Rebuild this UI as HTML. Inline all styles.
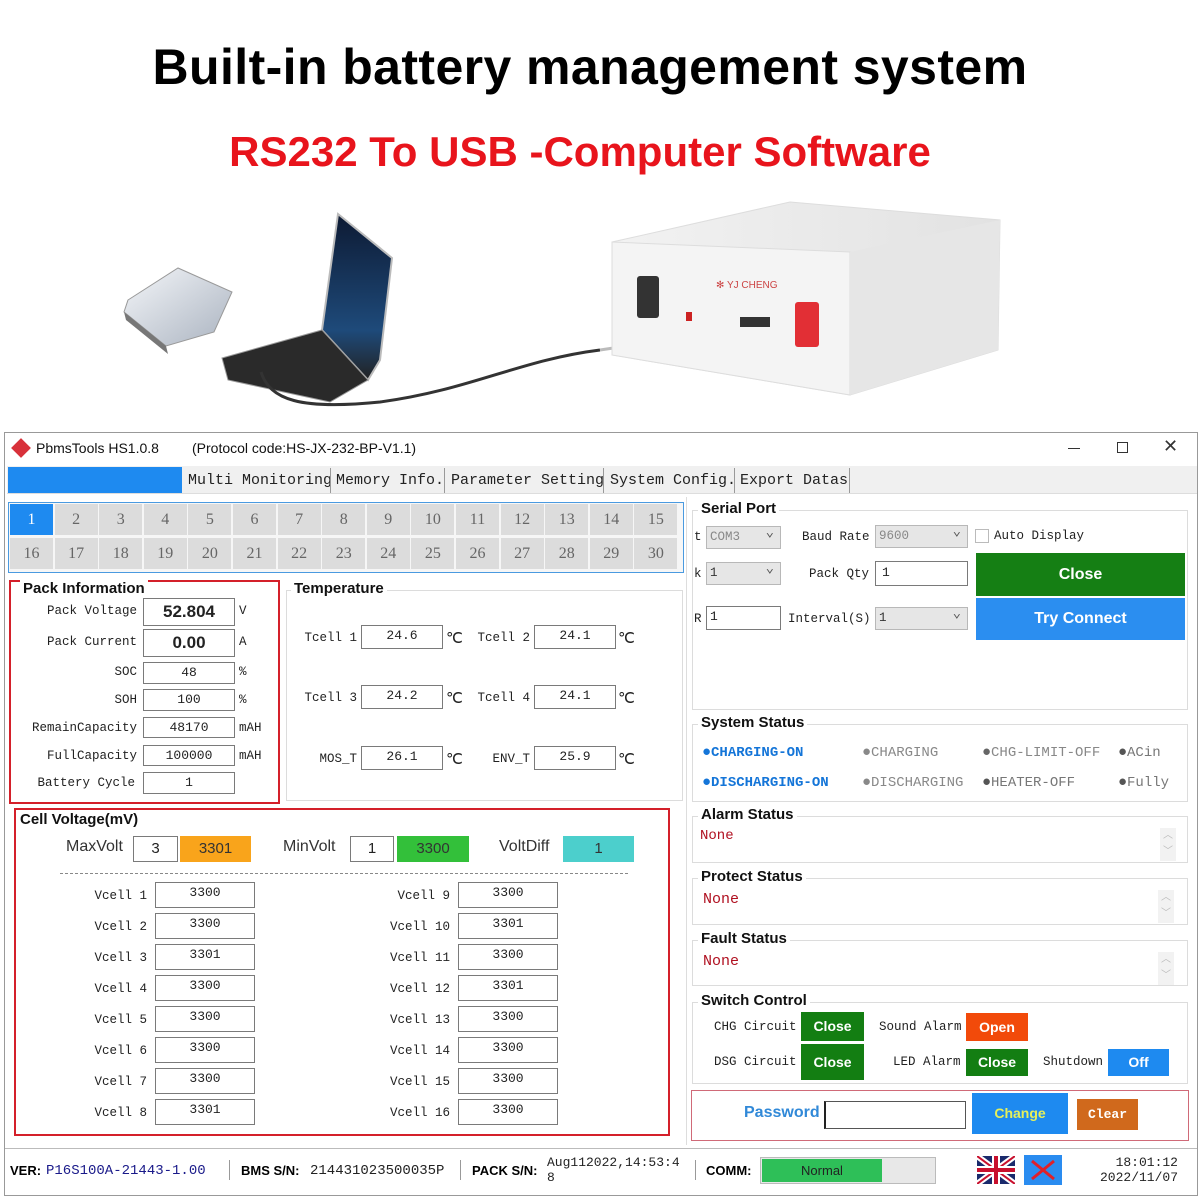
<!DOCTYPE html>
<html><head><meta charset="utf-8"><style>
*{margin:0;padding:0;box-sizing:border-box}
body{width:1200px;height:1200px;background:#fff;position:relative;overflow:hidden;font-family:"Liberation Sans",sans-serif}
.a{position:absolute}
.m{font-family:"Liberation Mono","DejaVu Sans Mono",monospace;font-size:12.5px;color:#222;white-space:nowrap}
.s{font-size:14px}
.b{position:absolute;border:1px solid #7a7a7a;background:#fff;font-family:"Liberation Mono",monospace;font-size:13px;text-align:center;color:#222}
.g{position:absolute;border:1px solid #dcdcdc}
.gt{position:absolute;font-weight:bold;font-size:15px;color:#111;background:#fff;padding:0 3px;white-space:nowrap}
.r{text-align:right}
.btn{position:absolute;color:#fff;font-weight:bold;font-size:14px;text-align:center}
.cell{position:absolute;width:43px;height:31px;background:#dcdcdc;color:#666;font-family:"Liberation Serif",serif;font-size:16px;text-align:center;line-height:31px}
.sel{position:absolute;border:1px solid #b8b8b8;background:#e6e6e6;font-family:"Liberation Mono",monospace;font-size:12.5px;color:#333;padding-left:3px}
.sel:after{content:"⌄";position:absolute;right:6px;top:-4px;color:#555;font-size:14px}
</style></head><body>

<div class="a" style="left:0;top:38px;width:1180px;text-align:center;font-size:50px;font-weight:bold;color:#000;letter-spacing:0.4px">Built-in battery management system</div>
<div class="a" style="left:0;top:128px;width:1160px;text-align:center;font-size:42px;font-weight:bold;color:#e8141c">RS232 To USB -Computer Software</div>

<svg class="a" style="left:0;top:190px" width="1200" height="240">
 <defs><linearGradient id="lg" x1="0" y1="0" x2="1" y2="1"><stop offset="0" stop-color="#f4f6f9"/><stop offset="1" stop-color="#aab3c0"/></linearGradient>
 <linearGradient id="bx" x1="0" y1="0" x2="1" y2="0"><stop offset="0" stop-color="#f2f2f2"/><stop offset="1" stop-color="#e2e2e2"/></linearGradient>
 <linearGradient id="sc" x1="0" y1="0" x2="0" y2="1"><stop offset="0" stop-color="#0d1a33"/><stop offset="0.7" stop-color="#1e4a7a"/><stop offset="1" stop-color="#222"/></linearGradient></defs>
 <polygon points="128,110 178,78 232,102 214,142 166,156 124,122" fill="url(#lg)" stroke="#999"/>
 <polygon points="124,122 166,156 168,164 126,130" fill="#777"/>
 <polygon points="338,24 392,68 380,170 368,190 322,140" fill="url(#sc)" stroke="#bbb" stroke-width="2"/>
 <polygon points="222,168 322,140 368,190 330,212 228,190" fill="#2a2a2a" stroke="#999"/>
 <path d="M261,182 C 270,210 300,220 380,212 C 470,200 520,170 600,160" stroke="#333" stroke-width="3" fill="none"/>
 <path d="M600,160 L 700,145" stroke="#bbb" stroke-width="3" fill="none"/>
 <polygon points="612,52 790,12 1000,30 998,160 850,205 612,165" fill="url(#bx)" stroke="#ddd"/>
 <polygon points="612,52 850,62 850,205 612,165" fill="#f4f4f4" stroke="#ddd"/>
 <polygon points="850,62 1000,30 998,160 850,205" fill="#e6e6e6"/>
 <rect x="637" y="86" width="22" height="42" fill="#333" rx="3"/>
 <rect x="795" y="112" width="24" height="45" fill="#e22f35" rx="3"/>
 <text x="716" y="98" font-size="10" fill="#c44">✻ YJ CHENG</text>
 <rect x="686" y="122" width="6" height="9" fill="#c22"/>
 <rect x="740" y="127" width="30" height="10" fill="#333"/>
</svg>

<!-- window -->
<div class="a" style="left:4px;top:432px;width:1194px;height:764px;border:1px solid #999;background:#fff"></div>
<div class="a" style="left:14px;top:441px;width:14px;height:14px;background:#d8313a;transform:rotate(45deg)"></div>
<div class="a" style="left:36px;top:440px;font-size:14px;color:#111">PbmsTools HS1.0.8</div>
<div class="a" style="left:192px;top:440px;font-size:14px;color:#111">(Protocol code:HS-JX-232-BP-V1.1)</div>
<div class="a" style="left:1068px;top:448px;width:12px;height:1px;background:#333"></div>
<div class="a" style="left:1117px;top:442px;width:11px;height:11px;border:1px solid #333"></div>
<div class="a" style="left:1163px;top:436px;font-size:18px;color:#333">✕</div>

<div class="a" style="left:7px;top:466px;width:1190px;height:28px;background:#f0f0f0;border-bottom:1px solid #ddd"></div>
<div class="a" style="left:8px;top:467px;width:174px;height:26px;background:#1e8af0"></div>
<div class="a m" style="left:188px;top:472px;font-size:15px">Multi Monitoring</div>
<div class="a" style="left:330px;top:468px;width:1px;height:25px;background:#999"></div>
<div class="a m" style="left:336px;top:472px;font-size:15px">Memory Info.</div>
<div class="a" style="left:444px;top:468px;width:1px;height:25px;background:#999"></div>
<div class="a m" style="left:451px;top:472px;font-size:15px">Parameter Setting</div>
<div class="a" style="left:603px;top:468px;width:1px;height:25px;background:#999"></div>
<div class="a m" style="left:610px;top:472px;font-size:15px">System Config.</div>
<div class="a" style="left:734px;top:468px;width:1px;height:25px;background:#999"></div>
<div class="a m" style="left:740px;top:472px;font-size:15px">Export Datas</div>
<div class="a" style="left:849px;top:468px;width:1px;height:25px;background:#999"></div>

<!-- pack grid -->
<div class="a" style="left:8px;top:502px;width:676px;height:71px;border:1px solid #4a9ae0;background:#f6f6f6"></div>
<div id="grid"></div>
<script>
var h='';for(var i=0;i<30;i++){var r=i<15?0:1,c=i%15;var x=10+c*44.6,y=504+r*34;
h+='<div class="cell" style="left:'+x+'px;top:'+y+'px;'+(i==0?'background:#1e8af0;color:#fff':'')+'">'+(i+1)+'</div>';}
document.getElementById('grid').innerHTML=h;
</script>

<!-- Pack info -->
<div class="a" style="left:9px;top:580px;width:271px;height:224px;border:2px solid #d4202a"></div>
<div class="gt" style="left:20px;top:580px;font-size:15px">Pack Information</div>
<div class="a m r" style="left:10px;top:604px;width:127px">Pack Voltage</div>
<div class="b" style="left:143px;top:598px;width:92px;height:28px;font:bold 17px 'Liberation Sans';line-height:26px">52.804</div>
<div class="a m" style="left:239px;top:604px">V</div>
<div class="a m r" style="left:10px;top:635px;width:127px">Pack Current</div>
<div class="b" style="left:143px;top:629px;width:92px;height:28px;font:bold 17px 'Liberation Sans';line-height:26px">0.00</div>
<div class="a m" style="left:239px;top:635px">A</div>
<div class="a m r" style="left:10px;top:665px;width:127px">SOC</div>
<div class="b" style="left:143px;top:662px;width:92px;height:22px;line-height:20px">48</div>
<div class="a m" style="left:239px;top:665px">%</div>
<div class="a m r" style="left:10px;top:693px;width:127px">SOH</div>
<div class="b" style="left:143px;top:689px;width:92px;height:22px;line-height:20px">100</div>
<div class="a m" style="left:239px;top:693px">%</div>
<div class="a m r" style="left:10px;top:721px;width:127px">RemainCapacity</div>
<div class="b" style="left:143px;top:717px;width:92px;height:21px;line-height:19px">48170</div>
<div class="a m" style="left:239px;top:721px">mAH</div>
<div class="a m r" style="left:10px;top:749px;width:127px">FullCapacity</div>
<div class="b" style="left:143px;top:745px;width:92px;height:21px;line-height:19px">100000</div>
<div class="a m" style="left:239px;top:749px">mAH</div>
<div class="a m r" style="left:10px;top:776px;width:125px">Battery Cycle</div>
<div class="b" style="left:143px;top:772px;width:92px;height:22px;line-height:20px">1</div>

<!-- Temperature -->
<div class="g" style="left:286px;top:590px;width:397px;height:211px"></div>
<div class="gt" style="left:291px;top:580px">Temperature</div>
<div class="a m r" style="left:290px;top:631px;width:67px">Tcell 1</div>
<div class="b" style="left:361px;top:625px;width:82px;height:24px;line-height:20px">24.6</div>
<div class="a m" style="left:446px;top:629px;font-size:15px">℃</div>
<div class="a m r" style="left:460px;top:631px;width:70px">Tcell 2</div>
<div class="b" style="left:534px;top:625px;width:82px;height:24px;line-height:20px">24.1</div>
<div class="a m" style="left:618px;top:629px;font-size:15px">℃</div>
<div class="a m r" style="left:290px;top:691px;width:67px">Tcell 3</div>
<div class="b" style="left:361px;top:685px;width:82px;height:24px;line-height:20px">24.2</div>
<div class="a m" style="left:446px;top:689px;font-size:15px">℃</div>
<div class="a m r" style="left:460px;top:691px;width:70px">Tcell 4</div>
<div class="b" style="left:534px;top:685px;width:82px;height:24px;line-height:20px">24.1</div>
<div class="a m" style="left:618px;top:689px;font-size:15px">℃</div>
<div class="a m r" style="left:290px;top:752px;width:67px">MOS_T</div>
<div class="b" style="left:361px;top:746px;width:82px;height:24px;line-height:20px">26.1</div>
<div class="a m" style="left:446px;top:750px;font-size:15px">℃</div>
<div class="a m r" style="left:460px;top:752px;width:70px">ENV_T</div>
<div class="b" style="left:534px;top:746px;width:82px;height:24px;line-height:20px">25.9</div>
<div class="a m" style="left:618px;top:750px;font-size:15px">℃</div>

<!-- Cell voltage -->
<div class="a" style="left:14px;top:808px;width:656px;height:328px;border:2px solid #d4202a"></div>
<div class="gt" style="left:17px;top:811px">Cell Voltage(mV)</div>
<div class="a" style="left:66px;top:838px;font-size:16px;color:#333">MaxVolt</div>
<div class="b" style="left:133px;top:836px;width:45px;height:26px;font:15px 'Liberation Sans';line-height:24px">3</div>
<div class="a" style="left:180px;top:836px;width:71px;height:26px;background:#f9a41b;text-align:center;font-size:15px;line-height:26px;color:#333">3301</div>
<div class="a" style="left:283px;top:838px;font-size:16px;color:#333">MinVolt</div>
<div class="b" style="left:350px;top:836px;width:44px;height:26px;font:15px 'Liberation Sans';line-height:24px">1</div>
<div class="a" style="left:397px;top:836px;width:72px;height:26px;background:#33c03a;text-align:center;font-size:15px;line-height:26px;color:#333">3300</div>
<div class="a" style="left:499px;top:838px;font-size:16px;color:#333">VoltDiff</div>
<div class="a" style="left:563px;top:836px;width:71px;height:26px;background:#4ccfcc;text-align:center;font-size:15px;line-height:26px;color:#333">1</div>
<div class="a" style="left:60px;top:873px;width:568px;border-top:1px dashed #888"></div>
<div id="vc"></div>
<script>
var v=['3300','3300','3301','3300','3300','3300','3300','3301','3300','3301','3300','3301','3300','3300','3300','3300'];var h='';
for(var i=0;i<16;i++){var col=i<8?0:1,r=i%8,y=882+r*31;var lx=col?370:80,bx=col?458:155;
h+='<div class="a m r" style="left:'+lx+'px;top:'+(y+7)+'px;width:'+(col?80:67)+'px">Vcell '+(i+1)+'</div>';
h+='<div class="b" style="left:'+bx+'px;top:'+y+'px;width:100px;height:26px;line-height:20px">'+v[i]+'</div>';}
document.getElementById('vc').innerHTML=h;
</script>

<!-- right panel -->
<div class="a" style="left:686px;top:497px;width:1px;height:648px;background:#ddd"></div>
<div class="g" style="left:692px;top:510px;width:496px;height:200px"></div>
<div class="gt" style="left:698px;top:500px">Serial Port</div>
<div class="a m" style="left:694px;top:530px">t</div>
<div class="sel" style="left:706px;top:526px;width:75px;height:23px;line-height:21px;color:#888">COM3</div>
<div class="a m" style="left:802px;top:530px">Baud Rate</div>
<div class="sel" style="left:875px;top:525px;width:93px;height:23px;line-height:21px;color:#888">9600</div>
<div class="a" style="left:975px;top:529px;width:14px;height:14px;border:1px solid #bbb"></div>
<div class="a m" style="left:994px;top:529px">Auto Display</div>
<div class="a m" style="left:694px;top:567px">k</div>
<div class="sel" style="left:706px;top:562px;width:75px;height:23px;line-height:21px">1</div>
<div class="a m" style="left:809px;top:567px">Pack Qty</div>
<div class="b" style="left:875px;top:561px;width:93px;height:25px;text-align:left;padding-left:6px;line-height:22px">1</div>
<div class="btn" style="left:976px;top:553px;width:209px;height:43px;background:#157f14;line-height:43px;font-size:16px">Close</div>
<div class="a m" style="left:694px;top:612px">R</div>
<div class="b" style="left:706px;top:606px;width:75px;height:24px;text-align:left;padding-left:3px;line-height:20px">1</div>
<div class="a m" style="left:788px;top:612px">Interval(S)</div>
<div class="sel" style="left:875px;top:607px;width:93px;height:23px;line-height:21px">1</div>
<div class="btn" style="left:976px;top:598px;width:209px;height:42px;background:#2b8ef0;line-height:42px;font-size:16px">Try Connect</div>

<div class="g" style="left:692px;top:724px;width:496px;height:78px"></div>
<div class="gt" style="left:698px;top:714px">System Status</div>
<div class="a m s" style="left:702px;top:744px;color:#1475d8;font-weight:bold"><span style="font-size:15px">●</span>CHARGING-ON</div>
<div class="a m s" style="left:862px;top:744px;color:#888"><span style="font-size:15px">●</span>CHARGING</div>
<div class="a m s" style="left:982px;top:744px;color:#888"><span style="font-size:15px;color:#666">●</span>CHG-LIMIT-OFF</div>
<div class="a m s" style="left:1118px;top:744px;color:#777"><span style="font-size:15px;color:#555">●</span>ACin</div>
<div class="a m s" style="left:702px;top:774px;color:#1475d8;font-weight:bold"><span style="font-size:15px">●</span>DISCHARGING-ON</div>
<div class="a m s" style="left:862px;top:774px;color:#888"><span style="font-size:15px">●</span>DISCHARGING</div>
<div class="a m s" style="left:982px;top:774px;color:#777"><span style="font-size:15px;color:#555">●</span>HEATER-OFF</div>
<div class="a m s" style="left:1118px;top:774px;color:#777"><span style="font-size:15px;color:#555">●</span>Fully</div>

<div class="g" style="left:692px;top:816px;width:496px;height:47px"></div>
<div class="gt" style="left:698px;top:806px">Alarm Status</div>
<div class="a m s" style="left:700px;top:828px;color:#b01020">None</div>
<div class="a" style="left:1160px;top:828px;width:16px;height:33px;background:#f2f2f2;color:#bbb;font-size:10px;text-align:center;line-height:16px">︿<br>﹀</div>
<div class="g" style="left:692px;top:878px;width:496px;height:47px"></div>
<div class="gt" style="left:698px;top:868px">Protect Status</div>
<div class="a m" style="left:703px;top:891px;color:#b01020;font-size:15px">None</div>
<div class="a" style="left:1158px;top:890px;width:16px;height:33px;background:#f2f2f2;color:#bbb;font-size:10px;text-align:center;line-height:16px">︿<br>﹀</div>
<div class="g" style="left:692px;top:940px;width:496px;height:46px"></div>
<div class="gt" style="left:698px;top:930px">Fault Status</div>
<div class="a m" style="left:703px;top:953px;color:#b01020;font-size:15px">None</div>
<div class="a" style="left:1158px;top:952px;width:16px;height:33px;background:#f2f2f2;color:#bbb;font-size:10px;text-align:center;line-height:16px">︿<br>﹀</div>

<div class="g" style="left:692px;top:1002px;width:496px;height:82px"></div>
<div class="gt" style="left:698px;top:992px">Switch Control</div>
<div class="a m" style="left:714px;top:1020px">CHG Circuit</div>
<div class="btn" style="left:801px;top:1012px;width:63px;height:29px;background:#137e12;line-height:29px">Close</div>
<div class="a m" style="left:879px;top:1020px">Sound Alarm</div>
<div class="btn" style="left:966px;top:1013px;width:62px;height:28px;background:#f24a0a;line-height:28px">Open</div>
<div class="a m" style="left:714px;top:1055px">DSG Circuit</div>
<div class="btn" style="left:801px;top:1044px;width:63px;height:36px;background:#137e12;line-height:36px">Close</div>
<div class="a m" style="left:893px;top:1055px">LED Alarm</div>
<div class="btn" style="left:966px;top:1049px;width:62px;height:27px;background:#137e12;line-height:27px">Close</div>
<div class="a m" style="left:1043px;top:1055px">Shutdown</div>
<div class="btn" style="left:1108px;top:1049px;width:61px;height:27px;background:#1e8af0;line-height:27px">Off</div>

<div class="a" style="left:691px;top:1090px;width:498px;height:51px;border:1px solid #d06a78"></div>
<div class="a" style="left:744px;top:1104px;font-size:16px;font-weight:bold;color:#3189d8">Password</div>
<div class="a" style="left:824px;top:1101px;width:142px;height:28px;border:1px solid #555;border-left:2px solid #222"></div>
<div class="btn" style="left:972px;top:1093px;width:96px;height:41px;background:#1e8af0;color:#e6f05a;line-height:41px">Change</div>
<div class="btn" style="left:1077px;top:1099px;width:61px;height:31px;background:#d0691c;line-height:31px;font-family:'Liberation Mono',monospace;font-size:13px">Clear</div>

<!-- status bar -->
<div class="a" style="left:5px;top:1148px;width:1192px;height:1px;background:#bbb"></div>
<div class="a" style="left:5px;top:1149px;width:1192px;height:46px;background:#fff"></div>
<div class="a" style="left:10px;top:1163px;font-size:13px;font-weight:bold">VER:</div>
<div class="a m s" style="left:46px;top:1163px;color:#1a1a8a">P16S100A-21443-1.00</div>
<div class="a" style="left:229px;top:1160px;width:1px;height:20px;background:#999"></div>
<div class="a" style="left:241px;top:1163px;font-size:13px;font-weight:bold">BMS S/N:</div>
<div class="a m s" style="left:310px;top:1163px">214431023500035P</div>
<div class="a" style="left:460px;top:1160px;width:1px;height:20px;background:#999"></div>
<div class="a" style="left:472px;top:1163px;font-size:13px;font-weight:bold">PACK S/N:</div>
<div class="a m" style="left:547px;top:1155px;font-size:13px;line-height:15px">Aug112022,14:53:4<br>8</div>
<div class="a" style="left:695px;top:1160px;width:1px;height:20px;background:#999"></div>
<div class="a" style="left:706px;top:1163px;font-size:13px;font-weight:bold">COMM:</div>
<div class="a" style="left:760px;top:1157px;width:176px;height:27px;background:#e8e8e8;border:1px solid #bbb"></div>
<div class="a" style="left:762px;top:1159px;width:120px;height:23px;background:#2ebf58;text-align:center;font-size:13px;line-height:23px;color:#222">Normal</div>
<svg class="a" style="left:977px;top:1156px" width="38" height="28" viewBox="0 0 38 28"><rect width="38" height="28" fill="#1a2a6c"/><path d="M0,0L38,28M38,0L0,28" stroke="#fff" stroke-width="6"/><path d="M0,0L38,28M38,0L0,28" stroke="#c8102e" stroke-width="2"/><path d="M19,0V28M0,14H38" stroke="#fff" stroke-width="8"/><path d="M19,0V28M0,14H38" stroke="#c8102e" stroke-width="4"/></svg>
<div class="a" style="left:1024px;top:1155px;width:38px;height:30px;background:#2a8cf0"></div>
<svg class="a" style="left:1024px;top:1155px" width="38" height="30"><path d="M8,6 L30,24 M8,24 L30,6" stroke="#e0202a" stroke-width="3"/></svg>
<div class="a m r" style="left:1080px;top:1155px;width:98px;font-size:13px;line-height:15px">18:01:12<br>2022/11/07</div>
</body></html>
